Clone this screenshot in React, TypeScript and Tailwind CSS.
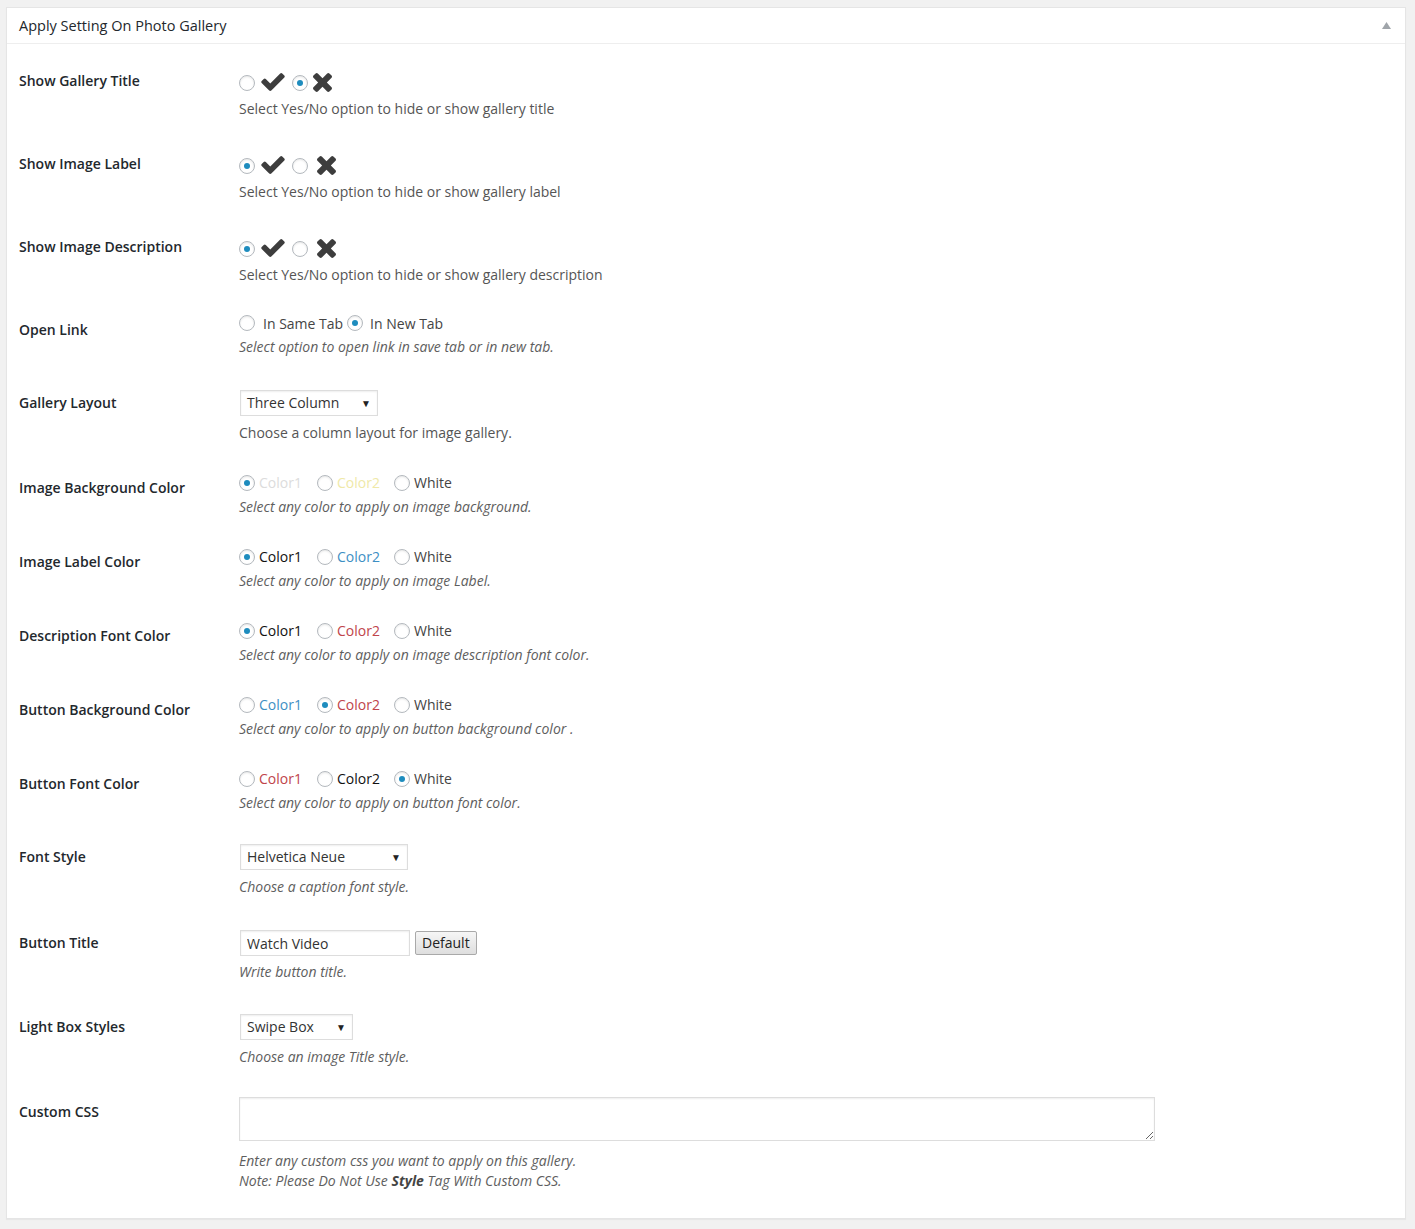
import React from "react";

const FONT = { fontFamily: '"Open Sans", "Noto Sans", Arial, sans-serif' };

function Radio({ checked }: { checked?: boolean }) {
  return (
    <span className="flex w-4 h-4 shrink-0 items-center justify-center rounded-full border border-[#b4b9be] bg-white shadow-[inset_0_1px_2px_rgba(0,0,0,0.1)]">
      {checked && <span className="w-[6px] h-[6px] rounded-full bg-[#1e8cbe]" />}
    </span>
  );
}

function CheckIcon() {
  return (
    <svg width="24" height="18" viewBox="121 334 1550 1188" className="block shrink-0">
      <path
        fill="#3d3d3d"
        d="M1671 566q0 40-28 68l-724 724-136 136q-28 28-68 28t-68-28l-136-136-362-362q-28-28-28-68t28-68l136-136q28-28 68-28t68 28l294 295 656-657q28-28 68-28t68 28l136 136q28 28 28 68z"
      />
    </svg>
  );
}

function CrossIcon() {
  return (
    <svg width="19" height="19" viewBox="110 366 1188 1188" className="block shrink-0">
      <path
        fill="#3d3d3d"
        d="M1298 1322q0 40-28 68l-136 136q-28 28-68 28t-68-28l-294-294-294 294q-28 28-68 28t-68-28l-136-136q-28-28-28-68t28-68l294-294-294-294q-28-28-28-68t28-68l136-136q28-28 68-28t68 28l294 294 294-294q28-28 68-28t68 28l136 136q28 28 28 68t-28 68l-294 294 294 294q28 28 28 68z"
      />
    </svg>
  );
}

function Row({ label, children }: { label: string; children: React.ReactNode }) {
  return (
    <div className="flex">
      <div className="w-[220px] shrink-0 pt-[20px] text-[14px] leading-[18px] font-semibold text-[#23282d]">
        {label}
      </div>
      <div className="flex-1 flex flex-col">{children}</div>
    </div>
  );
}

function YesNo({ label, yes, desc, wide }: { label: string; yes: boolean; desc: string; wide?: boolean }) {
  return (
    <Row label={label}>
      <div className="pt-[18px] h-[42px] flex items-center">
        <span className="flex mt-[2px]">
          <Radio checked={yes} />
        </span>
        <span className="flex ml-[6px]">
          <CheckIcon />
        </span>
        <span className="flex ml-[7px] mt-[2px]">
          <Radio checked={!yes} />
        </span>
        <span className={`flex ${wide ? "ml-[9px]" : "ml-[5px]"}`}>
          <CrossIcon />
        </span>
      </div>
      <p className="mt-[5px] pb-[16px] text-[14px] leading-[20px] text-[#555]">{desc}</p>
    </Row>
  );
}

type Opt = { text: string; color: string; checked?: boolean };

function ColorRow({ label, opts, desc, last }: { label: string; opts: Opt[]; desc: string; last?: boolean }) {
  const widths = ["w-[78px]", "w-[77px]", ""];
  return (
    <Row label={label}>
      <div className="pt-[14px] h-[34px] flex items-center text-[14px]">
        {opts.map((o, i) => (
          <label key={o.text + i} className={`flex items-center gap-[4px] ${widths[i]}`}>
            <Radio checked={o.checked} />
            <span className="leading-[20px]" style={{ color: o.color }}>
              {o.text}
            </span>
          </label>
        ))}
      </div>
      <p className={`mt-[4px] ${last ? "pb-[15px]" : "pb-[16px]"} text-[14px] leading-[20px] italic text-[#5e5e5e]`}>{desc}</p>
    </Row>
  );
}

function FakeSelect({ value, width }: { value: string; width: string }) {
  return (
    <div className={`${width} h-[26px] flex items-center justify-between pl-[6px] pr-[6px] border border-[#ddd] bg-white text-[14px] text-[#333] shadow-[inset_0_1px_2px_rgba(0,0,0,0.07)]`}>
      <span className="leading-[20px]">{value}</span>
      <span className="text-[10px] leading-[10px] text-[#222]">▼</span>
    </div>
  );
}

export default function App() {
  return (
    <div className="min-h-[1229px] bg-[#f1f1f1] pt-[7px] pl-[6px] pr-[9px] pb-[10px]" style={FONT}>
      <div className="bg-white border border-[#e5e5e5] shadow-[0_1px_1px_rgba(0,0,0,0.04)] text-[#444]">
        {/* header */}
        <div className="h-[36px] flex items-center justify-between pl-[12px] pr-[14px] border-b border-[#eee]">
          <h2 className="text-[14.5px] leading-[18px] text-[#23282d]">Apply Setting On Photo Gallery</h2>
          <svg width="9" height="7" viewBox="0 0 9 7">
            <polygon points="4.5,0 9,7 0,7" fill="#a0a5aa" />
          </svg>
        </div>

        <div className="pl-[12px] pr-[12px] pt-[8px]">
          <YesNo label="Show Gallery Title" yes={false} desc="Select Yes/No option to hide or show gallery title" />
          <YesNo label="Show Image Label" yes={true} wide desc="Select Yes/No option to hide or show gallery label" />
          <YesNo label="Show Image Description" yes={true} wide desc="Select Yes/No option to hide or show gallery description" />

          <Row label="Open Link">
            <div className="pt-[12px] h-[32px] flex items-center text-[14px] text-[#444]">
              <Radio />
              <span className="ml-[8px]">In Same Tab</span>
              <span className="flex ml-[4px]">
                <Radio checked />
              </span>
              <span className="ml-[7px]">In New Tab</span>
            </div>
            <p className="mt-[4px] pb-[17px] text-[14px] leading-[20px] italic text-[#5e5e5e]">
              Select option to open link in save tab or in new tab.
            </p>
          </Row>

          <Row label="Gallery Layout">
            <div className="pt-[16px] pl-[1px]">
              <FakeSelect value="Three Column" width="w-[138px]" />
            </div>
            <p className="mt-[7px] pb-[16px] text-[14px] leading-[20px] text-[#555]">
              Choose a column layout for image gallery.
            </p>
          </Row>

          <ColorRow
            label="Image Background Color"
            opts={[
              { text: "Color1", color: "#dcdcdc", checked: true },
              { text: "Color2", color: "#efe9a8" },
              { text: "White", color: "#444" },
            ]}
            desc="Select any color to apply on image background."
          />
          <ColorRow
            label="Image Label Color"
            opts={[
              { text: "Color1", color: "#111", checked: true },
              { text: "Color2", color: "#3d8fc4" },
              { text: "White", color: "#444" },
            ]}
            desc="Select any color to apply on image Label."
          />
          <ColorRow
            label="Description Font Color"
            opts={[
              { text: "Color1", color: "#111", checked: true },
              { text: "Color2", color: "#c0444a" },
              { text: "White", color: "#444" },
            ]}
            desc="Select any color to apply on image description font color."
          />
          <ColorRow
            label="Button Background Color"
            opts={[
              { text: "Color1", color: "#3d8fc4" },
              { text: "Color2", color: "#c0444a", checked: true },
              { text: "White", color: "#444" },
            ]}
            desc="Select any color to apply on button background color ."
          />
          <ColorRow
            label="Button Font Color"
            opts={[
              { text: "Color1", color: "#c0444a" },
              { text: "Color2", color: "#111" },
              { text: "White", color: "#444", checked: true },
            ]}
            desc="Select any color to apply on button font color."
            last
          />

          <Row label="Font Style">
            <div className="pt-[16px] pl-[1px]">
              <FakeSelect value="Helvetica Neue" width="w-[168px]" />
            </div>
            <p className="mt-[7px] pb-[17px] text-[14px] leading-[20px] italic text-[#5e5e5e]">Choose a caption font style.</p>
          </Row>

          <Row label="Button Title">
            <div className="pt-[16px] pl-[1px] flex items-center gap-[5px]">
              <input
                readOnly
                value="Watch Video"
                className="w-[170px] h-[26px] px-[6px] border border-[#ddd] text-[14px] text-[#333] outline-none shadow-[inset_0_1px_2px_rgba(0,0,0,0.07)]"
                style={FONT}
              />
              <button
                className="h-[24px] px-[6px] border border-[#a9a9a9] rounded-[2px] bg-gradient-to-b from-[#f6f6f6] to-[#dedede] text-[14px] leading-[20px] text-[#222]"
                style={FONT}
              >
                Default
              </button>
            </div>
            <p className="mt-[6px] pb-[16px] text-[14px] leading-[20px] italic text-[#5e5e5e]">Write button title.</p>
          </Row>

          <Row label="Light Box Styles">
            <div className="pt-[16px] pl-[1px]">
              <FakeSelect value="Swipe Box" width="w-[113px]" />
            </div>
            <p className="mt-[7px] pb-[16px] text-[14px] leading-[20px] italic text-[#5e5e5e]">Choose an image Title style.</p>
          </Row>

          <Row label="Custom CSS">
            <div className="pt-[14px]">
              <textarea
                className="block w-[916px] h-[44px] border border-[#ddd] outline-none p-[6px] text-[14px] shadow-[inset_0_1px_2px_rgba(0,0,0,0.07)]"
                style={FONT}
              />
            </div>
            <div className="mt-[10px] pb-[27px] text-[14px] leading-[20px] italic text-[#5e5e5e]">
              <p>Enter any custom css you want to apply on this gallery.</p>
              <p>
                Note: Please Do Not Use <b className="font-bold text-[#444]">Style</b> Tag With Custom CSS.
              </p>
            </div>
          </Row>
        </div>
      </div>
    </div>
  );
}
